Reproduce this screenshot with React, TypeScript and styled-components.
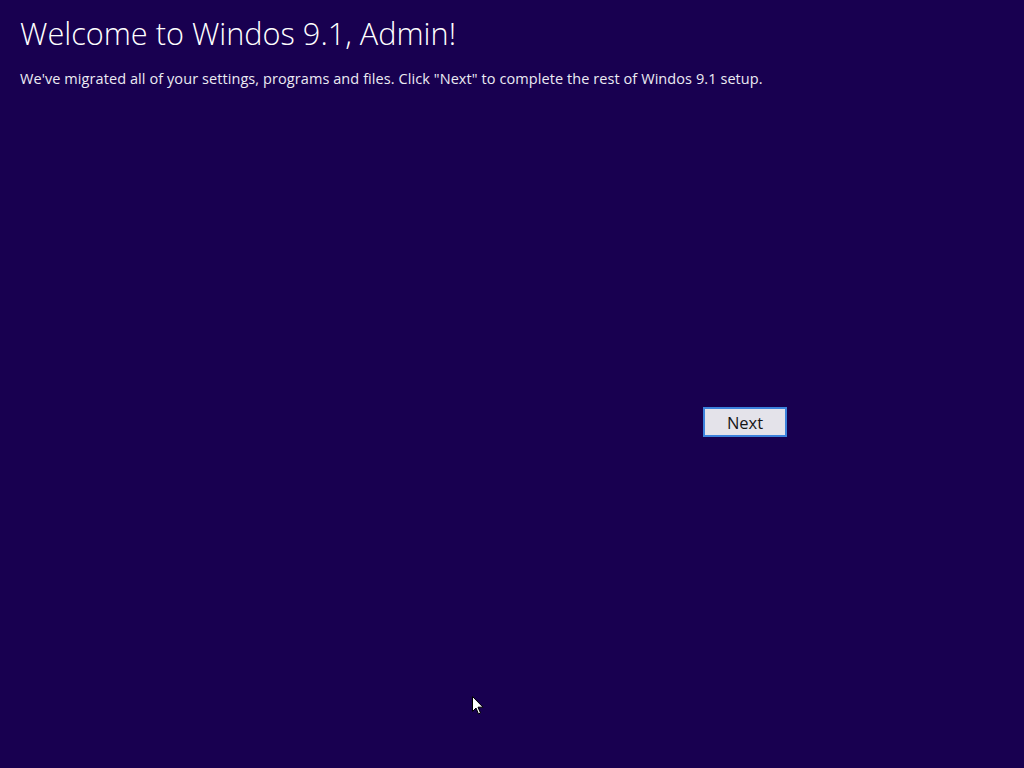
import styled, { createGlobalStyle } from 'styled-components'

const GlobalStyle = createGlobalStyle`
  html, body {
    margin: 0;
    padding: 0;
    background: #180050;
  }
  #root {
    min-height: 100vh;
  }
`

const Screen = styled.div`
  position: relative;
  width: 1024px;
  height: 768px;
  background: #180050;
  color: #ffffff;
  font-family: 'Open Sans', 'Liberation Sans', sans-serif;
  overflow: hidden;
  display: flex;
  flex-direction: column;
`

const Header = styled.div`
  padding: 13px 0 0 20px;
`

const Title = styled.h1`
  margin: 0;
  font-size: 30.7px;
  font-weight: 300;
  line-height: 40px;
`

const Subtitle = styled.p`
  margin: 16px 0 0 0;
  font-size: 14.5px;
  font-weight: 400;
  letter-spacing: 0.08px;
  line-height: 20px;
  color: #ecebf3;
`

const Footer = styled.div`
  display: flex;
  justify-content: flex-end;
  padding: 318px 237px 0 0;
`

const NextButton = styled.button`
  width: 84px;
  height: 30px;
  box-sizing: border-box;
  border: 2px solid #3c82dc;
  background: #e4e3ea;
  color: #151515;
  font-family: 'Open Sans', 'Liberation Sans', sans-serif;
  font-size: 16.5px;
  padding: 1px 0 0 0;
  line-height: 26px;
  cursor: default;
`

const Pointer = styled.svg`
  position: absolute;
  left: 472px;
  top: 696px;
`

export default function App() {
  return (
    <>
      <GlobalStyle />
      <Screen>
        <Header>
          <Title>Welcome to Windos 9.1, Admin!</Title>
          <Subtitle>
            We've migrated all of your settings, programs and files. Click "Next" to complete the rest of Windos 9.1 setup.
          </Subtitle>
        </Header>
        <Footer>
          <NextButton>Next</NextButton>
        </Footer>
        <Pointer width="12" height="19" viewBox="0 0 12 19">
          <path d="M0.5 0.5 L0.5 15.5 L4 12 L6.5 18 L8.5 17 L6 11.2 L11 11.2 Z" fill="#ffffff" stroke="#000000" strokeWidth="1" />
        </Pointer>
      </Screen>
    </>
  )
}
